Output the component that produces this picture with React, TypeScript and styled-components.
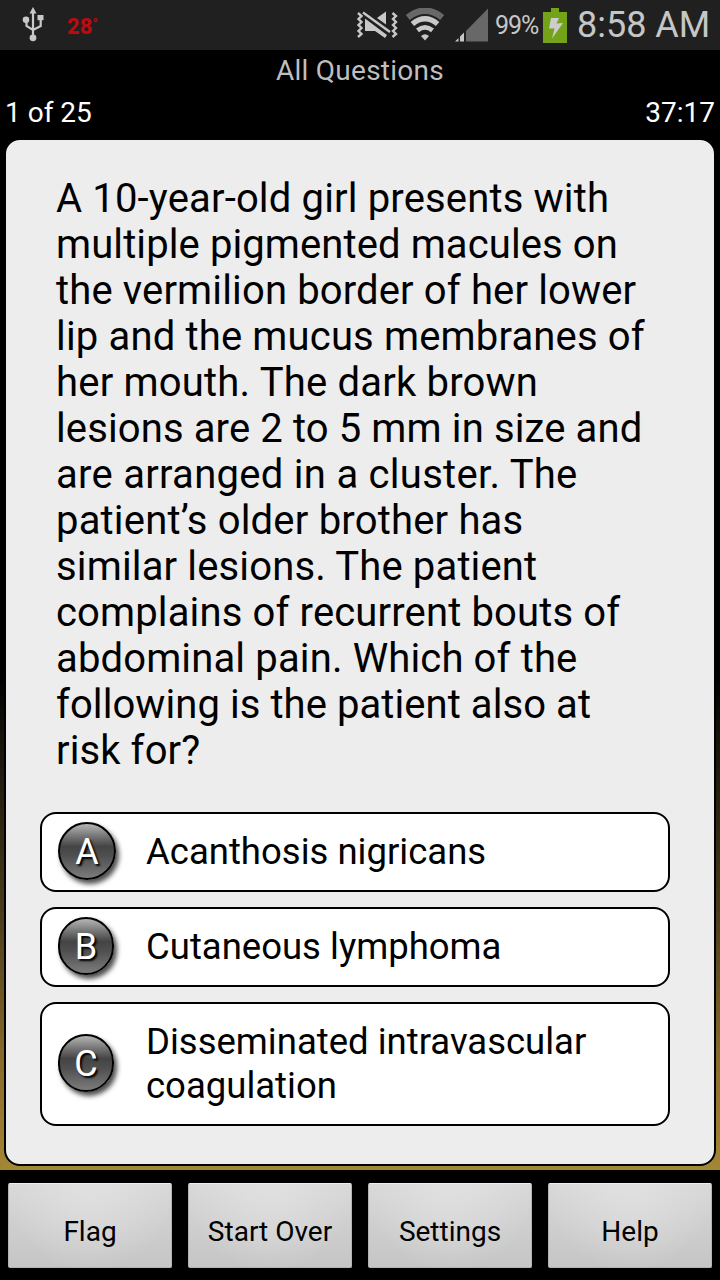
import React from "react";
import styled, { createGlobalStyle } from "styled-components";

const GlobalStyle = createGlobalStyle`
  * { box-sizing: border-box; }
  html, body { margin: 0; padding: 0; background: #000; }
  body { font-family: Roboto, "Liberation Sans", sans-serif; overflow: hidden; }
`;

const Screen = styled.div`
  width: 720px;
  height: 1280px;
  display: flex;
  flex-direction: column;
  background: #000;
`;

const StatusBar = styled.header`
  height: 50px;
  flex: none;
  display: flex;
  align-items: center;
  justify-content: space-between;
  padding: 0 10px 0 22px;
  background: #202020;
  color: #c6c6c6;
`;

const StatusGroup = styled.div`
  display: flex;
  align-items: center;
  height: 50px;
`;

const Temperature = styled.span`
  margin-left: 23px;
  padding-top: 3px;
  font-size: 22px;
  line-height: 28px;
  font-weight: 800;
  color: #b80c12;
  sup { font-size: 14px; line-height: 0; vertical-align: 5px; }
`;

const Percent = styled.span`
  width: 44px;
  margin-left: 6px;
  font-size: 25px;
  line-height: 50px;
  letter-spacing: -1px;
  padding-top: 2px;
  white-space: nowrap;
`;

const Clock = styled.span`
  width: 133px;
  margin-left: 10px;
  font-size: 36px;
  line-height: 50px;
  white-space: nowrap;
`;

const Title = styled.h1`
  flex: none;
  height: 41px;
  margin: 0;
  font-size: 28px;
  line-height: 41px;
  font-weight: 400;
  letter-spacing: 0.25px;
  text-align: center;
  color: #bebebe;
`;

const Progress = styled.div`
  flex: none;
  height: 47px;
  display: flex;
  justify-content: space-between;
  padding: 0 5px;
  font-size: 28px;
  line-height: 43px;
  color: #fff;
`;

const Body = styled.main`
  flex: none;
  height: 1032px;
  padding: 0 4px 4px;
  background: linear-gradient(#000 0, #000 52%, #15120a 58%, #4a3c1a 75%, #8b6c2b 90%, #a48735 100%);
`;

const Card = styled.section`
  height: 1028px;
  padding: 36px 44px 0 34px;
  border: 2px solid #000;
  border-radius: 16px;
  background: #ededed;
`;

const Question = styled.p`
  margin: 0 0 38px;
  padding-left: 16px;
  font-size: 40px;
  line-height: 46px;
  color: #000;
`;

const Line = styled.span<{ $spacing?: number }>`
  display: block;
  white-space: nowrap;
  letter-spacing: ${(p) => p.$spacing ?? 0}px;
`;

const Options = styled.div`
  display: flex;
  flex-direction: column;
  gap: 15px;
`;

const Option = styled.button`
  width: 630px;
  min-height: 80px;
  display: flex;
  align-items: center;
  padding: 16px;
  border: 2px solid #000;
  border-radius: 16px;
  background: #fff;
  color: #000;
  font-family: inherit;
  text-align: left;
`;

const Letter = styled.span<{ $wide?: boolean }>`
  flex: none;
  width: ${(p) => (p.$wide ? 58 : 56)}px;
  height: 58px;
  margin: -8px ${(p) => (p.$wide ? 30 : 32)}px -6px -0px;
  border: 2px solid #000;
  border-radius: 29px;
  background: linear-gradient(#b4b6b4 0, #777 22%, #444 42%, #505050 60%, #7c7c7c 100%);
  box-shadow: 3px 4px 5px rgba(0, 0, 0, 0.7);
  color: #fff;
  font-size: 36px;
  line-height: 57px;
  text-align: center;
  text-shadow: 2px 2px 2px #000;
`;

const Answer = styled.span`
  font-size: 36.5px;
  line-height: 44px;
`;

const Toolbar = styled.nav`
  flex: none;
  height: 110px;
  display: flex;
  gap: 16px;
  padding: 13px 8px 12px;
  background: #000;
`;

const ToolButton = styled.button`
  flex: 1;
  height: 85px;
  padding: 12px 0 0;
  border: 1px solid #b4b4b4;
  border-top-color: #eee;
  border-radius: 2px;
  background: radial-gradient(ellipse at 50% 0, #e0e0e0, transparent 75%), linear-gradient(#d8d8d8, #c5c5c5);
  color: #000;
  font-family: inherit;
  font-size: 28px;
  line-height: 32px;
`;

const Icon = styled.svg<{ $gap?: number }>`
  display: block;
  flex: none;
  margin-left: ${(p) => p.$gap ?? 0}px;
`;

const UsbIcon = () => (
  <Icon width="22" height="36" viewBox="0 0 22 36" fill="#c8c8c8">
    <path d="M11 0L14.5 6.5H7.5Z" />
    <circle cx="4" cy="12.7" r="3.3" />
    <rect x="15.5" y="8" width="6" height="5.2" />
    <circle cx="11" cy="30.8" r="3.4" />
    <path d="M11 5V30M4.5 13V19L11 23L18.7 19V12" fill="none" stroke="#c8c8c8" strokeWidth="2.2" />
  </Icon>
);

const VibrateMuteIcon = () => (
  <Icon width="42" height="30" viewBox="0 0 42 30">
    <path d="M2 3L5.5 6L2.5 9L5.5 12L2.5 15L5.5 18L2.5 21L5.5 24L2 27M36.5 3L40 6L37 9L40 12L37 15L40 18L37 21L40 24L36.5 27" fill="none" stroke="#c8c8c8" strokeWidth="2.4" />
    <path d="M21 8L30 1.5V14.5Z" fill="#c8c8c8" />
    <path d="M9 8.5L31 25L29 28L19 21H9Z" fill="#c8c8c8" />
    <path d="M7 2.5L34 22" stroke="#c8c8c8" strokeWidth="2.4" />
  </Icon>
);

const WifiIcon = () => (
  <Icon $gap={7} width="40" height="34" viewBox="0 0 40 34" fill="none">
    <path d="M2.8 9.5Q20 -4 37.2 9.5" stroke="#686868" strokeWidth="6.5" />
    <path d="M7.4 16Q20 5.6 32.6 16" stroke="#c8c8c8" strokeWidth="5.4" />
    <path d="M12.5 22.3Q20 16.4 27.5 22.3" stroke="#c8c8c8" strokeWidth="4.8" />
    <path d="M16 28Q20 24.5 24 28L20 32.5Z" fill="#c8c8c8" />
  </Icon>
);

const SignalIcon = () => (
  <Icon $gap={9} width="35" height="34" viewBox="0 0 35 34">
    <path d="M12 23L34 0.5V33.5H12Z" fill="#686868" />
    <path d="M1 33.5L4.5 30V33.5ZM6 28.5L10 24.5V33.5H6Z" fill="#c8c8c8" />
  </Icon>
);

const BatteryIcon = () => (
  <Icon $gap={4} width="24" height="35" viewBox="0 0 24 35">
    <path d="M8 0H16V4H24V35H0V4H8Z" fill="#74a31a" />
    <path d="M8 10H16L13.5 15.5L20 15L9 30.5L11.5 20.5H6Z" fill="#cdcdcd" />
  </Icon>
);

const questionLines: { text: string; spacing?: number }[] = [
  { text: "A 10-year-old girl presents with", spacing: 0.16 },
  { text: "multiple pigmented macules on", spacing: 0.1 },
  { text: "the vermilion border of her lower", spacing: 0.14 },
  { text: "lip and the mucus membranes of", spacing: 0.16 },
  { text: "her mouth. The dark brown", spacing: 0.2 },
  { text: "lesions are 2 to 5 mm in size and", spacing: 0.12 },
  { text: "are arranged in a cluster. The", spacing: 0.28 },
  { text: "patient’s older brother has", spacing: 0.19 },
  { text: "similar lesions. The patient", spacing: 0.15 },
  { text: "complains of recurrent bouts of", spacing: 0.14 },
  { text: "abdominal pain. Which of the", spacing: 0.14 },
  { text: "following is the patient also at", spacing: 0.07 },
  { text: "risk for?", spacing: 0.1 },
];

const options = [
  { letter: "A", lines: ["Acanthosis nigricans"] },
  { letter: "B", lines: ["Cutaneous lymphoma"] },
  { letter: "C", lines: ["Disseminated intravascular", "coagulation"] },
];

export default function App() {
  return (
    <Screen>
      <GlobalStyle />
      <StatusBar>
        <StatusGroup>
          <UsbIcon />
          <Temperature>28<sup>°</sup></Temperature>
        </StatusGroup>
        <StatusGroup>
          <VibrateMuteIcon />
          <WifiIcon />
          <SignalIcon />
          <Percent>99%</Percent>
          <BatteryIcon />
          <Clock>8:58 AM</Clock>
        </StatusGroup>
      </StatusBar>
      <Title>All Questions</Title>
      <Progress>
        <span>1 of 25</span>
        <span>37:17</span>
      </Progress>
      <Body>
        <Card>
          <Question>
            {questionLines.map((l) => (
              <Line key={l.text} $spacing={l.spacing}>{l.text}</Line>
            ))}
          </Question>
          <Options>
            {options.map((o) => (
              <Option key={o.letter}>
                <Letter $wide={o.letter === "A"}>{o.letter}</Letter>
                <Answer>
                  {o.lines.map((l) => (
                    <Line key={l}>{l}</Line>
                  ))}
                </Answer>
              </Option>
            ))}
          </Options>
        </Card>
      </Body>
      <Toolbar>
        {["Flag", "Start Over", "Settings", "Help"].map((t) => (
          <ToolButton key={t}>{t}</ToolButton>
        ))}
      </Toolbar>
    </Screen>
  );
}
